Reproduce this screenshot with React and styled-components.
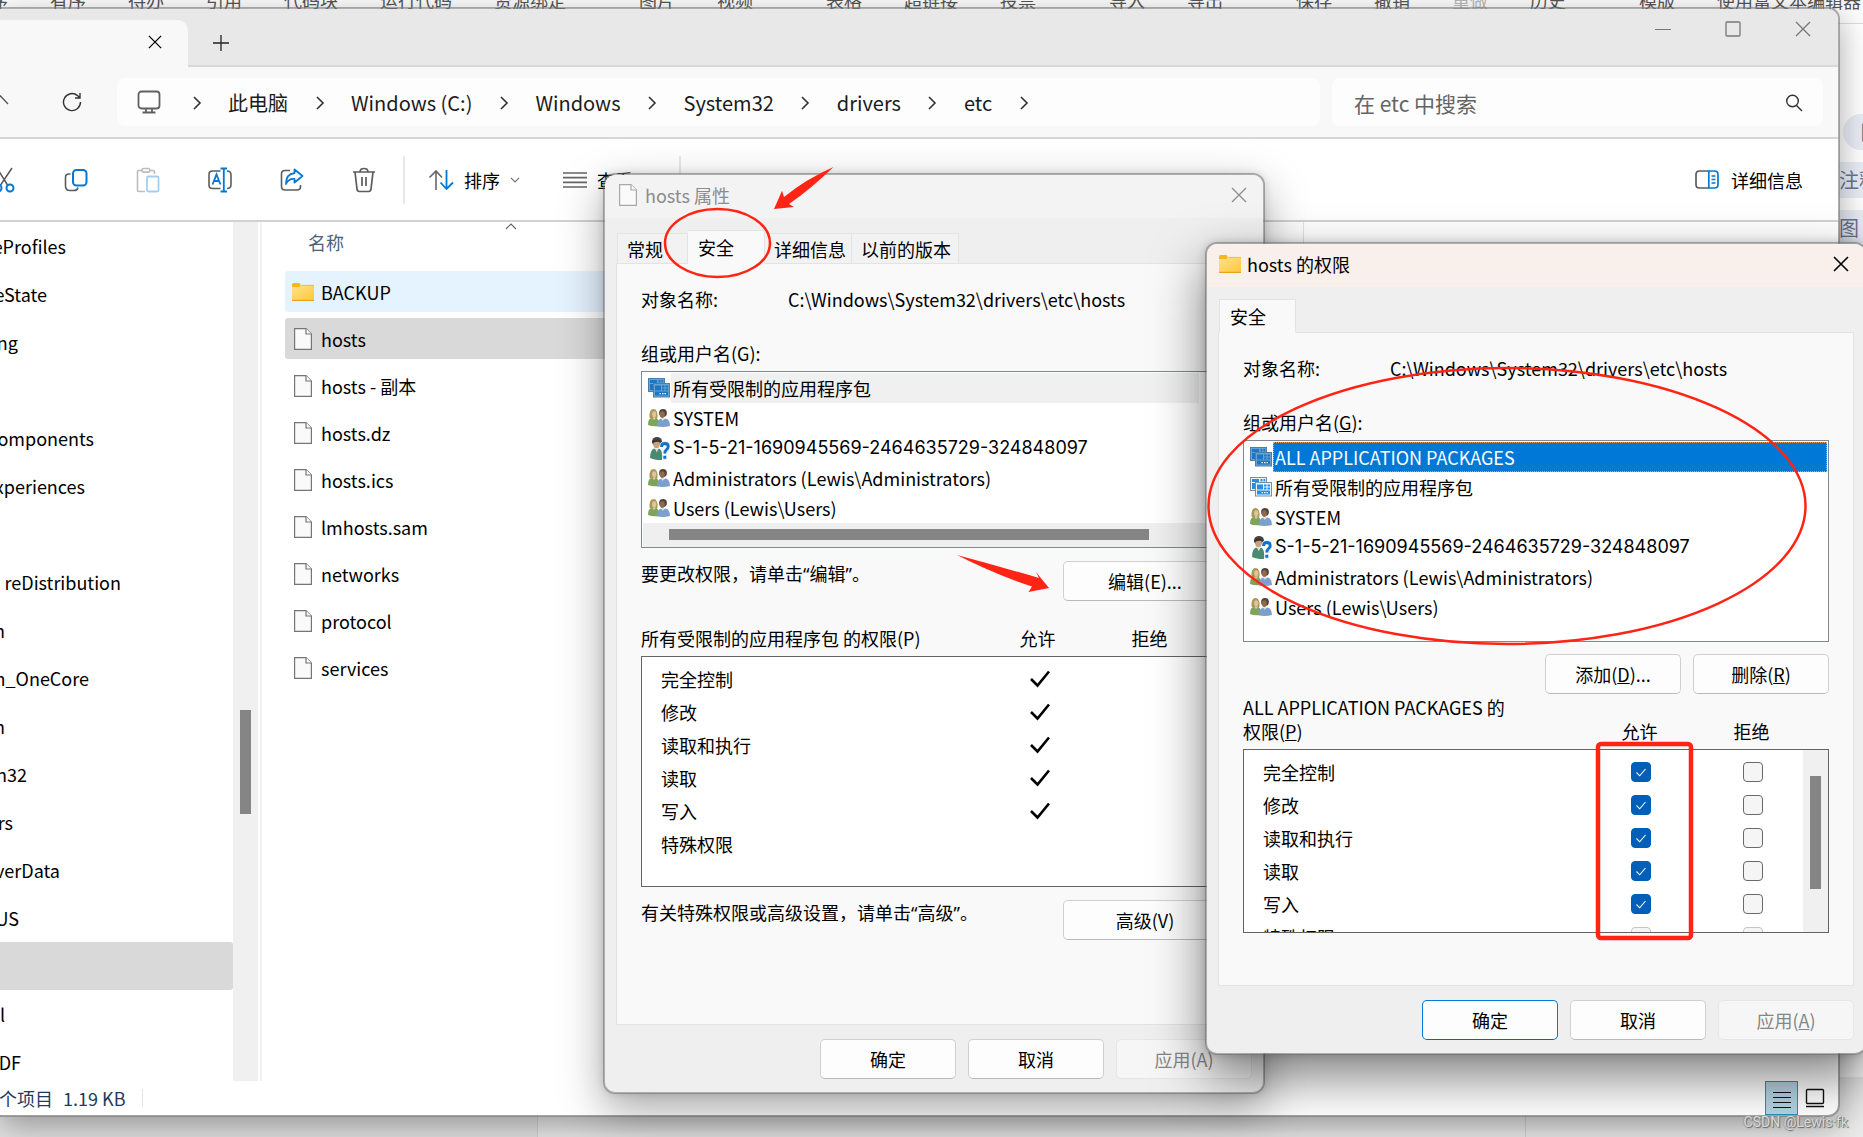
import React, { useState } from 'react'
import styled, { createGlobalStyle, css } from 'styled-components'

const GlobalStyle = createGlobalStyle`
*{
  box-sizing:border-box;
}
body{
  margin:0;
  overflow:hidden;
  font-family:"Noto Sans CJK SC", "Noto Sans", sans-serif;
  font-size:18px;
  line-height:24px;
  color:#000;
}
button, input{
  font:inherit;
  color:inherit;
}
button{
  border:none;
  background:none;
  padding:0;
}
svg{
  display:block;
  flex:none;
}
`;

// desktop
const Desktop = styled.div`
position:relative;
display:flex;
flex-direction:column;
justify-content:space-between;
height:100vh;
overflow:hidden;
background-color:#fff;
`;
const EditorBar = styled.div`
display:flex;
gap:73px;
height:24px;
margin-left:-10px;
background-color:#fdfdfd;
border-bottom:1px solid #ddd;
color:#555;
white-space:nowrap;
`;
const EditorGroup = styled.div`
display:flex;
gap:42px;
margin-top:-12px;
`;
const EditorItem = styled.span`
opacity:${({ $off }) => ($off ? 0.4 : 1)};
`;
const EditorSide = styled.div`
display:flex;
flex-direction:column;
align-items:flex-end;
flex:1;
gap:12px;
padding-top:90px;
color:#6d7590;
font-size:20px;
`;
const SideTag = styled.div`
display:flex;
align-items:center;
height:36px;
overflow:hidden;
white-space:nowrap;
border-radius:${({ $round }) => ($round ? '18px 0 0 18px' : '0')};
padding-left:${({ $round }) => ($round ? '16px' : '0')};
width:${({ $round }) => ($round ? '20px' : '24px')};
background-color:#e9edf6;
`;
const DeskFooter = styled.div`
display:flex;
height:60px;
background-color:#ececec;
`;
const DeskFooterPart = styled.div`
width:${({ $width }) => $width};
background-color:${({ $color }) => $color};
border-right:1px solid #d4d4d4;
`;

// explorer window
const Explorer = styled.main`
position:absolute;
top:7px;
left:0;
right:23px;
bottom:20px;
display:flex;
flex-direction:column;
border:2px solid rgba(120, 120, 120, 0.6);
border-left:none;
border-radius:0 12px 12px 0;
background-color:#fff;
background-clip:padding-box;
box-shadow:0 10px 32px rgba(0, 0, 0, 0.34);
overflow:hidden;
`;
const TitleRow = styled.div`
display:flex;
height:58px;
background-color:#e8e8e8;
border-bottom:2px solid #d8d8d8;
`;
const Tab = styled.div`
display:flex;
align-items:center;
justify-content:flex-end;
width:188px;
height:47px;
margin-top:11px;
padding:0 26px 3px 0;
border-radius:0 10px 0 0;
background-color:#f8f8f8;
`;
const NewTab = styled.button`
width:66px;
margin-top:11px;
display:flex;
align-items:center;
justify-content:center;
height:46px;
`;
const WindowButtons = styled.div`
display:flex;
margin-left:auto;
height:40px;
`;
const WindowButton = styled.button`
display:flex;
align-items:center;
justify-content:center;
width:70px;
color:#777;
`;
const NavRow = styled.div`
display:flex;
align-items:center;
height:72px;
padding-right:15px;
background-color:#f8f8f8;
border-bottom:2px solid #d6d6d6;
`;
const NavButton = styled.button`
display:flex;
justify-content:center;
width:${({ $width }) => $width};
`;
const Address = styled.nav`
display:flex;
align-items:center;
gap:4px;
flex:1;
height:48px;
margin-right:12px;
padding-left:20px;
border-radius:8px;
background-color:#fdfdfd;
color:#1b1b1b;
`;
const Crumbs = styled.div`
display:flex;
align-items:center;
padding-top:2px;
font-size:20px;
`;
const Crumb = styled.a`
color:inherit;
text-decoration:none;
white-space:nowrap;
`;
const CrumbArrow = styled.span`
display:flex;
justify-content:center;
width:63px;
`;
const Search = styled.label`
display:flex;
align-items:center;
width:491px;
height:48px;
padding:2px 20px 0 22px;
border-radius:8px;
background-color:#fdfdfd;
`;
const SearchInput = styled.input`
flex:1;
min-width:0;
border:none;
outline:none;
background:none;
padding:0;
font-size:21px;
&::placeholder{
  color:#646464;
  opacity:1;
}
`;
const Toolbar = styled.div`
display:flex;
align-items:center;
height:83px;
margin-left:-32px;
padding-right:35px;
border-bottom:2px solid #d2d2d2;
white-space:nowrap;
`;
const ToolButton = styled.button`
display:flex;
align-items:center;
justify-content:center;
width:72px;
height:48px;
`;
const MenuButton = styled.button`
display:flex;
align-items:center;
gap:${({ $push }) => ($push ? '12px' : '10px')};
margin-left:${({ $push }) => ($push ? 'auto' : '23px')};
margin-right:${({ $push }) => ($push ? '0' : '20px')};
`;
const Divider = styled.div`
width:2px;
height:48px;
margin-left:${({ $gap }) => $gap || '3px'};
background-color:#e8e8e8;
`;
const Body = styled.div`
display:flex;
flex:1;
min-height:0;
`;
const Tree = styled.ul`
width:233px;
margin:0;
padding:0;
list-style:none;
overflow:hidden;
`;
const TreeItem = styled.li`
display:flex;
height:48px;
align-items:center;
border-radius:0 3px 3px 0;
background-color:${({ $active }) => ($active ? '#d9d9d9' : 'transparent')};
`;
const TreeName = styled.span`
display:flex;
justify-content:flex-end;
white-space:nowrap;
width:${({ $end }) => $end}px;
`;
const TreeScroll = styled.div`
width:25px;
margin-right:2px;
padding:488px 7px 0;
background-color:#f0f0f0;
`;
const TreeThumb = styled.div`
height:104px;
background-color:#858585;
`;
const Files = styled.section`
flex:1;
border-left:2px solid #f2f2f2;
`;
const FilesHead = styled.div`
position:relative;
width:1042px;
height:49px;
padding:8px 0 0 46px;
border-right:1px solid #e2e2e2;
color:#4c607a;
`;
const SortMark = styled.span`
position:absolute;
top:0;
left:243px;
`;
const FileRows = styled.ul`
display:flex;
flex-direction:column;
gap:6px;
margin:0;
padding:0 0 0 23px;
list-style:none;
`;
const FileRow = styled.li`
display:flex;
align-items:center;
gap:7px;
width:960px;
height:41px;
padding-left:7px;
border-radius:3px;
background-color:${({ $tone }) => $tone || 'transparent'};
`;
const FileIcon = styled.span`
display:flex;
justify-content:center;
width:22px;
`;
const StatusBar = styled.footer`
display:flex;
align-items:center;
gap:10px;
height:34px;
margin-left:-1px;
padding-right:12px;
color:#1f3a5f;
white-space:nowrap;
`;
const StatusLine = styled.span`
width:1px;
height:18px;
margin-left:7px;
background-color:#e4e4e4;
`;
const ViewButtons = styled.div`
display:flex;
align-items:center;
align-self:stretch;
gap:6px;
margin-left:auto;
`;
const ViewButton = styled.button`
display:flex;
align-items:center;
justify-content:center;
height:34px;
width:${({ $on }) => ($on ? '33px' : '22px')};
padding-top:${({ $on }) => ($on ? '4px' : '0')};
border:${({ $on }) => ($on ? '1px solid #2a8fc4' : 'none')};
background-color:${({ $on }) => ($on ? '#b5d3e2' : 'transparent')};
`;

// property dialogs
const Dialog = styled.section`
position:absolute;
top:${({ $top }) => $top}px;
left:${({ $left }) => $left}px;
width:662px;
border:2px solid rgba(110, 110, 110, 0.55);
border-radius:12px;
background-color:#efefef;
background-clip:padding-box;
box-shadow:${({ $front }) => ($front
    ? '0 22px 52px rgba(0, 0, 0, 0.5), 0 0 10px rgba(0, 0, 0, 0.16)'
    : '0 16px 44px rgba(0, 0, 0, 0.34), 0 0 8px rgba(0, 0, 0, 0.12)')};
`;
const DialogTitle = styled.header`
display:flex;
align-items:center;
gap:${({ $front }) => ($front ? '6px' : '8px')};
height:43px;
padding:0 16px 3px ${({ $front }) => ($front ? '12px' : '14px')};
border-radius:10px 10px 0 0;
background-color:${({ $front }) => ($front ? '#f9f0eb' : '#f3f3f3')};
color:${({ $front }) => ($front ? '#000' : '#8c8c8c')};
`;
const CloseButton = styled.button`
margin-left:auto;
`;
const DialogBody = styled.div`
padding:12px 11px 13px;
`;
const Tabs = styled.div`
display:flex;
align-items:flex-end;
height:34px;
margin-bottom:-1px;
padding-left:1px;
`;
const DialogTab = styled.button`
height:31px;
width:${({ $width }) => $width}px;
padding:1px 0 0 9px;
text-align:left;
white-space:nowrap;
border:1px solid #e3e3e3;
border-left-width:${({ $first }) => ($first ? '1px' : '0')};
background-color:#f2f2f2;
${({ $active }) => $active && css`
height:34px;
padding:0 0 0 10px;
border-bottom-color:#f9f9f9;
background-color:#f9f9f9;
`}
`;
const Pane = styled.div`
height:${({ $height }) => $height}px;
padding:23px 24px 0;
border:1px solid #e3e3e3;
background-color:#f9f9f9;
`;
const ObjectLine = styled.div`
display:grid;
grid-template-columns:147px 1fr;
margin-bottom:30px;
`;
const FieldLabel = styled.div`
margin-bottom:6px;
`;
const Principals = styled.ul`
display:flex;
flex-direction:column;
height:${({ $height }) => $height}px;
margin:0;
padding:1px 1px 0;
list-style:none;
border:1px solid #828790;
background-color:#fff;
`;
const Principal = styled.li`
display:flex;
align-items:center;
height:30px;
padding-left:5px;
white-space:nowrap;
`;
const PrincipalName = styled.span`
flex:1;
height:30px;
margin-left:1px;
margin-right:${({ $inset }) => ($inset ? '26px' : '0')};
padding:2px 1px;
border:1px dotted transparent;
${({ $wide }) => $wide && css`
font-family:Inter, "Noto Sans", sans-serif;
`}
${({ $mark }) => $mark === 'focus' && css`
border-color:#e8a05a;
background-color:#0078d7;
color:#fff;
`}
${({ $mark }) => $mark === 'soft' && css`
background-color:#f0f0f0;
`}
`;
const HScroll = styled.div`
height:24px;
margin:auto 0 1px;
padding:6px 76px 7px 26px;
background-color:#efefef;
`;
const HThumb = styled.div`
height:11px;
background-color:#858585;
`;
const HintRow = styled.div`
display:flex;
justify-content:space-between;
margin:13px 0 0;
`;
const Quote = styled.span`
font-family:"Noto Sans", sans-serif;
`;
const ButtonRow = styled.div`
display:flex;
justify-content:flex-end;
gap:12px;
margin-top:${({ $top }) => $top}px;
`;
const Button = styled.button`
width:${({ $wide }) => ($wide ? '164px' : '136px')};
height:40px;
border:1px solid ${({ $primary }) => ($primary ? '#0078d4' : '#d0d0d0')};
border-bottom-color:${({ $primary }) => ($primary ? '#0067c0' : '#b9b9b9')};
border-radius:5px;
background-color:#fdfdfd;
&:disabled{
  border-color:#e6e6e6;
  background-color:#f6f6f6;
  color:#868686;
}
`;
const PermTable = styled.table`
display:block;
margin-top:${({ $top }) => $top}px;
`;
const PermHead = styled.thead`
display:block;
margin-bottom:6px;
`;
const PermRow = styled.tr`
display:grid;
grid-template-columns:340px 113px 111px;
align-items:${({ $head }) => ($head ? 'end' : 'center')};
height:${({ $head }) => ($head ? 'auto' : '33px')};
`;
const PermLabel = styled.th`
padding:0 50px 0 ${({ $indent }) => ($indent ? '19px' : '0')};
font-weight:400;
text-align:left;
`;
const NoBreak = styled.span`
white-space:nowrap;
`;
const PermTitle = styled.th`
padding:0;
font-weight:400;
text-align:center;
`;
const PermCell = styled.td`
display:flex;
justify-content:center;
padding:0;
`;
const PermBody = styled.tbody`
position:relative;
display:block;
height:${({ $height }) => $height}px;
padding-top:5px;
overflow:hidden;
border:1px solid #646464;
background-color:#fff;
`;
const PermBox = styled.div`
position:relative;
`;
const PermScroll = styled.div`
position:absolute;
right:1px;
bottom:1px;
width:25px;
height:182px;
padding:26px 7px 0;
background-color:#f0f0f0;
`;
const PermThumb = styled.div`
height:113px;
background-color:#858585;
`;
const CheckWrap = styled.span`
display:grid;
width:20px;
height:20px;
`;
const CheckInput = styled.input`
grid-area:1 / 1;
appearance:none;
width:20px;
height:20px;
margin:0;
border:1px solid #6a6a6a;
border-radius:4px;
background-color:#f5f5f5;
&:checked{
  border-color:#005fb8;
  background-color:#005fb8;
}
&:disabled{
  border-color:#c5c5c5;
}
`;
const CheckMark = styled.svg`
grid-area:1 / 1;
pointer-events:none;
`;
const Marks = styled.svg`
position:absolute;
top:0;
left:0;
pointer-events:none;
`;
const Watermark = styled.div`
position:absolute;
right:15px;
bottom:5px;
font-family:Roboto, sans-serif;
font-size:14px;
line-height:20px;
color:#d8d8d8;
text-shadow:1px 1px 1px #666, -1px 0 1px #999;
`;

const editorGroups = [
  ['序', '有序', '待办', '引用', '代码块', '运行代码', '资源绑定'],
  ['图片', '视频'],
  ['表格', '超链接', '投票'],
  ['导入', '导出'],
  ['保存', '撤销', '重做', '历史'],
  ['模版', '使用富文本编辑器'],
];
const crumbs = ['此电脑', 'Windows (C:)', 'Windows', 'System32', 'drivers', 'etc'];
// name and the x where it ends, the tree is scrolled to the right
const tree = [
  ['eProfiles', 66], ['eState', 47], ['ng', 18], ['', 0], ['omponents', 94], ['xperiences', 85], ['', 0],
  ['reDistribution', 121], ['n', 5], ['n_OneCore', 89], ['n', 5], ['n32', 27], ['rs', 13], ['verData', 60],
  ['US', 19], ['', 0], ['l', 5], ['DF', 21],
];
const files = ['BACKUP', 'hosts', 'hosts - 副本', 'hosts.dz', 'hosts.ics', 'lmhosts.sam', 'networks', 'protocol', 'services'];
const principals = [
  { name: 'ALL APPLICATION PACKAGES', kind: 'package' },
  { name: '所有受限制的应用程序包', kind: 'package' },
  { name: 'SYSTEM', kind: 'group' },
  { name: 'S-1-5-21-1690945569-2464635729-324848097', kind: 'unknown' },
  { name: 'Administrators (Lewis\\Administrators)', kind: 'group' },
  { name: 'Users (Lewis\\Users)', kind: 'group' },
];
const permissions = ['完全控制', '修改', '读取和执行', '读取', '写入', '特殊权限'];
const objectPath = 'C:\\Windows\\System32\\drivers\\etc\\hosts';

const Cross = ({ size = 16, width = 1.3 }) => (
  <svg width={size} height={size} viewBox="0 0 16 16" fill="none" stroke="currentColor" strokeWidth={width}>
    <path d="M1 1L15 15M15 1L1 15" />
  </svg>
);
const Chevron = () => (
  <svg width="10" height="16" viewBox="0 0 10 16" fill="none" stroke="#333" strokeWidth="1.6">
    <path d="M2 2L8 8L2 14" />
  </svg>
);
const SmallDown = () => (
  <svg width="10" height="8" viewBox="0 0 10 8" fill="none" stroke="#777" strokeWidth="1.1">
    <path d="M1 2L5 6L9 2" />
  </svg>
);
const FileGlyph = ({ faded }) => (
  <svg width="18" height="22" viewBox="0 0 18 22" fill="#fafafa" stroke={faded ? '#a8a8a8' : '#767676'} strokeWidth="1.2">
    <path d="M.6 .6H12L17.4 6V21.4H.6Z" />
    <path d="M12 .6V6H17.4" />
  </svg>
);
const FolderGlyph = () => (
  <svg width="22" height="18" viewBox="0 0 22 18">
    <defs>
      <linearGradient id="folder" x1="0" y1="0" x2="1" y2="1">
        <stop offset="0" stopColor="#ffe28f" />
        <stop offset="1" stopColor="#ffc83a" />
      </linearGradient>
    </defs>
    <path d="M0 1.5Q0 0 1.5 0H7Q8.5 0 8.5 1.5V5H0Z" fill="#f8b51c" />
    <path d="M0 4H8L9.5 2H22V17H0Z" fill="url(#folder)" />
    <path d="M9.5 2.4H22" stroke="#eeb52c" strokeWidth=".8" />
    <path d="M0 17.4H22" stroke="#e6a41d" strokeWidth="1.2" />
  </svg>
);
const PackageGlyph = ({ active }) => {
  const back = active ? '#6aa3d0' : '#eaf4fc';
  const tile = active ? '#1c76c2' : '#2290e6';
  const edge = active ? '#4c7ea8' : '#7d8c98';
  return (
    <svg width="22" height="20" viewBox="0 0 22 20">
      <rect x=".5" y=".5" width="16" height="13" fill={back} stroke={edge} />
      <path d="M2 2H9V5H2ZM10.500 2H12.500V4.500H10.500ZM13.500 2H15.200V4.500H13.500ZM2 6H5V12H2Z" fill={tile} />
      <rect x="5.500" y="5.500" width="16" height="13.500" fill={back} stroke={edge} />
      <path d="M7 7.500H13V12.500H7ZM14 7.500H16.500V9.500H14ZM17.500 7.500H20V9.500H17.500ZM14 10.500H16.500V12.500H14ZM17.500 10.500H20V12.500H17.500ZM7 13.500H20V17.500H7Z" fill={tile} />
      <path d="M11.500 15.600H13M14 15.600H15.500M16.500 15.600H18" stroke="#fff" strokeWidth="1.2" />
    </svg>
  )
};
const GroupGlyph = () => (
  <svg width="22" height="18" viewBox="0 0 22 18">
    <path d="M1.500 8.500Q1 0 5.500 0Q10 0 9.500 8.500Q8 10 5.500 10Q3 10 1.500 8.500Z" fill="#a79a55" />
    <ellipse cx="6.200" cy="5.200" rx="2.100" ry="3" fill="#e3c39c" />
    <path d="M0 16Q0 9.500 3.500 9L6 10.500L8.500 9Q11 10 11 17Q4.500 18 0 16Z" fill="#7ea45a" />
    <path d="M4.700 8.600L6 10.800L7.600 8.600Z" fill="#ecd6b6" />
    <ellipse cx="15" cy="4" rx="3.900" ry="4" fill="#50443f" />
    <ellipse cx="14.300" cy="5.600" rx="2.500" ry="3.400" fill="#94694a" />
    <path d="M9 17.500Q9 10.500 13 9.500L14.800 11L17.500 9.500Q22 10.500 22 17Q16 18.500 9 17.500Z" fill="#7c9fcc" />
    <path d="M13 9.200L14.700 12L16.800 9.200Z" fill="#cfdcec" />
  </svg>
);
const UnknownGlyph = () => (
  <svg width="22" height="23" viewBox="0 0 22 23">
    <ellipse cx="9" cy="4.500" rx="5" ry="4.500" fill="#454341" />
    <ellipse cx="8.500" cy="7" rx="3.300" ry="4.200" fill="#c9a27c" />
    <path d="M4 4Q9 .5 13.500 4.500L13 5.500Q8 3.500 4.500 6.500Z" fill="#383634" />
    <path d="M2 21Q2 13 6 11.500L9 13L11 11.500Q15 13 14 23Q7 23.500 2 21Z" fill="#4a8a70" />
    <path d="M7 11L8.800 15.500L10.500 11Z" fill="#dfe9e2" />
    <path d="M13.500 10Q13.500 6.500 16.800 6.500Q20.200 6.500 20.200 9.500Q20.200 11.500 18.200 13Q16.800 14.200 16.800 16.500" fill="none" stroke="#dcecf8" strokeWidth="4.600" />
    <path d="M13.500 10Q13.500 6.500 16.800 6.500Q20.200 6.500 20.200 9.500Q20.200 11.500 18.200 13Q16.800 14.200 16.800 16.500" fill="none" stroke="#1173c7" strokeWidth="2.800" />
    <rect x="15" y="18.500" width="3.600" height="3.600" fill="#1173c7" stroke="#dcecf8" strokeWidth=".7" />
  </svg>
);
const Tick = () => (
  <svg width="22" height="18" viewBox="0 0 22 18" fill="none" stroke="#000" strokeWidth="2.6">
    <path d="M3 9L9.500 15.500L21 1.500" />
  </svg>
);

const glyphs = { group: GroupGlyph, unknown: UnknownGlyph, package: PackageGlyph };

const PrincipalList = ({ items, height, mark, children, inset }) => (
  <Principals $height={height} aria-label="组或用户名">
    {items.map((item, i) => {
      const Glyph = glyphs[item.kind];
      return (
        <Principal key={item.name}>
          <Glyph active={i === 0} />
          <PrincipalName $mark={i === 0 ? mark : ''} $inset={inset} $wide={item.kind === 'unknown'}>{item.name}</PrincipalName>
        </Principal>
      )
    })}
    {children}
  </Principals>
);

const PermissionHead = ({ children }) => (
  <PermHead>
    <PermRow $head>
      <PermLabel scope="col">{children}</PermLabel>
      <PermTitle scope="col">允许</PermTitle>
      <PermTitle scope="col">拒绝</PermTitle>
    </PermRow>
  </PermHead>
);

const Check = ({ label, checked, disabled, onChange }) => (
  <CheckWrap>
    <CheckInput type="checkbox" aria-label={label} checked={checked} disabled={disabled} onChange={onChange} />
    {checked && (
      <CheckMark width="20" height="20" viewBox="0 0 20 20" fill="none" stroke="#fff" strokeWidth="1.1">
        <path d="M5.500 10.500L8.700 13.800L14.500 7" />
      </CheckMark>
    )}
  </CheckWrap>
);

const ExplorerTools = () => (
  <Toolbar>
    <ToolButton aria-label="剪切">
      <svg width="24" height="26" viewBox="0 0 24 26" fill="none" strokeWidth="1.5">
        <path d="M5 1L15.500 18M20 1L8.500 18" stroke="#555" />
        <circle cx="6" cy="21" r="3.500" stroke="#0078d4" strokeWidth="2" />
        <circle cx="18" cy="21" r="3.500" stroke="#0078d4" strokeWidth="2" />
      </svg>
    </ToolButton>
    <ToolButton aria-label="复制">
      <svg width="24" height="24" viewBox="0 0 24 24" fill="none" strokeWidth="1.6">
        <path d="M6.500 6H5Q1.500 6 1.500 9.500V18Q1.500 22.500 6 22.500H10Q13.500 22.500 14 19.500" stroke="#5c5c5c" />
        <rect x="9" y="2" width="13.500" height="15.500" rx="3.500" stroke="#0078d4" strokeWidth="2" />
      </svg>
    </ToolButton>
    <ToolButton aria-label="粘贴">
      <svg width="24" height="26" viewBox="0 0 24 26" fill="none" strokeWidth="1.6">
        <path d="M6 3.500H2.500Q1.500 3.500 1.500 4.500V23Q1.500 24.500 3 24.500H9M13.500 3.500H17Q18.500 3.500 18.500 5V7" stroke="#bdbdbd" />
        <rect x="6" y="1.500" width="8" height="3.600" rx="1.800" stroke="#bdbdbd" />
        <rect x="11" y="9.500" width="11.500" height="15" rx="1.500" stroke="#a5cdf0" strokeWidth="1.8" />
      </svg>
    </ToolButton>
    <ToolButton aria-label="重命名">
      <svg width="26" height="26" viewBox="0 0 26 26" fill="none" strokeWidth="1.6">
        <path d="M13.500 4H5.500Q2 4 2 7.500V18Q2 21.500 5.500 21.500H13.500M20 4Q24 4 24 8V17.500Q24 21.500 20 21.500" stroke="#5c5c5c" />
        <path d="M5.500 17.500L9.500 7.500L13.500 17.500M6.800 14H12.200" stroke="#0078d4" strokeWidth="1.8" />
        <path d="M13.500 1.500H20M13.500 24.500H20M16.800 1.500V24.500" stroke="#0078d4" strokeWidth="1.8" />
      </svg>
    </ToolButton>
    <ToolButton aria-label="共享">
      <svg width="24" height="24" viewBox="0 0 24 24" fill="none" strokeWidth="1.6" strokeLinejoin="round">
        <path d="M10 2.500H5Q1.500 2.500 1.500 6V18.500Q1.500 22 5 22H17Q20.500 22 20.500 18.500V17" stroke="#5c5c5c" />
        <path d="M14.500 1.500L22.500 8L14.500 14.500V11Q8.500 10.500 6 16Q6 6 14.500 5.200Z" stroke="#0078d4" strokeWidth="1.8" />
      </svg>
    </ToolButton>
    <ToolButton aria-label="删除">
      <svg width="24" height="26" viewBox="0 0 24 26" fill="none" stroke="#5c5c5c" strokeWidth="1.7">
        <path d="M1 5H23M8 5Q8 1.500 12 1.500Q16 1.500 16 5M3 5L5 22Q5.200 24.500 7.500 24.500H16.500Q18.800 24.500 19 22L21 5M10 10V19M14 10V19" />
      </svg>
    </ToolButton>
    <Divider />
    <MenuButton>
      <svg width="26" height="22" viewBox="0 0 26 22" fill="none" strokeWidth="1.6">
        <path d="M8 21V2M1.500 8.500L8 2L14 8.500" stroke="#666" />
        <path d="M18.500 1V20M12.500 13.500L18.500 20L25 13.500" stroke="#0078d4" strokeWidth="1.8" />
      </svg>
      排序
      <SmallDown />
    </MenuButton>
    <MenuButton>
      <svg width="24" height="16" viewBox="0 0 24 16" stroke="#666" strokeWidth="1.7">
        <path d="M0 1H24M0 5.600H24M0 10.300H24M0 15H24" />
      </svg>
      查看
      <SmallDown />
    </MenuButton>
    <Divider $gap="6px" />
    <MenuButton $push>
      <svg width="24" height="19" viewBox="0 0 24 19" fill="none" strokeWidth="1.7">
        <path d="M13.500 1H4.500Q1 1 1 4.500V14.500Q1 18 4.500 18H13.500" stroke="#5c5c5c" />
        <path d="M13.800 1H19.500Q23 1 23 4.500V14.500Q23 18 19.500 18H13.800Z" stroke="#0078d4" />
        <path d="M16.500 6H20.500M16.500 9.500H20.500M16.500 13H20.500" stroke="#0078d4" strokeWidth="1.3" />
      </svg>
      详细信息
    </MenuButton>
  </Toolbar>
);

const ExplorerWindow = () => (
  <Explorer>
    <TitleRow>
      <Tab><button aria-label="关闭标签页"><Cross size={14} width={1.5} /></button></Tab>
      <NewTab aria-label="新标签页">
        <svg width="16" height="16" viewBox="0 0 16 16" stroke="#222" strokeWidth="1.3">
          <path d="M8 0V16M0 8H16" />
        </svg>
      </NewTab>
      <WindowButtons>
        <WindowButton aria-label="最小化">
          <svg width="16" height="16" viewBox="0 0 16 16" stroke="currentColor"><path d="M0 8.500H16" /></svg>
        </WindowButton>
        <WindowButton aria-label="最大化">
          <svg width="16" height="16" viewBox="0 0 16 16" fill="none" stroke="currentColor" strokeWidth="1.3">
            <rect x="1" y="1" width="14" height="14" rx="1" />
          </svg>
        </WindowButton>
        <WindowButton aria-label="关闭"><Cross /></WindowButton>
      </WindowButtons>
    </TitleRow>
    <NavRow>
      <NavButton $width="27px" aria-label="上一级">
        <svg width="46" height="20" viewBox="0 0 46 20" fill="none" stroke="#555" strokeWidth="1.3">
          <path d="M2 12L9.500 4L17 12" />
        </svg>
      </NavButton>
      <NavButton $width="90px" aria-label="刷新">
        <svg width="20" height="20" viewBox="0 0 20 20" fill="none" stroke="#333" strokeWidth="1.4">
          <path d="M18.500 10A8.500 8.500 0 1 1 15.500 3.600L17.500 5.500M18 1V6H13" />
        </svg>
      </NavButton>
      <Address>
        <svg width="24" height="24" viewBox="0 0 24 24" fill="none" stroke="#606060" strokeWidth="1.8">
          <rect x="1.500" y="1.500" width="21" height="17" rx="3" />
          <path d="M9 18.500V22M15 18.500V22M5.500 22.500H18.500" />
        </svg>
        <Crumbs>
          {crumbs.map((crumb) => (
            <React.Fragment key={crumb}>
              <CrumbArrow><Chevron /></CrumbArrow>
              <Crumb href="#">{crumb}</Crumb>
            </React.Fragment>
          ))}
          <CrumbArrow><Chevron /></CrumbArrow>
        </Crumbs>
      </Address>
      <Search>
        <SearchInput type="text" aria-label="搜索" placeholder="在 etc 中搜索" />
        <svg width="18" height="18" viewBox="0 0 18 18" fill="none" stroke="#333" strokeWidth="1.4">
          <circle cx="7.500" cy="7" r="5.800" />
          <path d="M11.500 11.500L17 17" />
        </svg>
      </Search>
    </NavRow>
    <ExplorerTools />
    <Body>
      <Tree>
        {tree.map(([name, end], i) => (
          <TreeItem key={i} $active={i === 15}>
            <TreeName $end={end}>{name}</TreeName>
          </TreeItem>
        ))}
      </Tree>
      <TreeScroll><TreeThumb /></TreeScroll>
      <Files>
        <FilesHead>
          名称
          <SortMark>
            <svg width="12" height="8" viewBox="0 0 12 8" fill="none" stroke="#666" strokeWidth="1.1">
              <path d="M1 7L6 2L11 7" />
            </svg>
          </SortMark>
        </FilesHead>
        <FileRows>
          {files.map((name, i) => (
            <FileRow key={name} $tone={['#e5f3ff', '#d9d9d9'][i]}>
              <FileIcon>{i === 0 ? <FolderGlyph /> : <FileGlyph />}</FileIcon>
              {name}
            </FileRow>
          ))}
        </FileRows>
      </Files>
    </Body>
    <StatusBar>
      <span>个项目</span>
      <span>1.19 KB</span>
      <StatusLine />
      <ViewButtons>
        <ViewButton $on aria-label="详细列表">
          <svg width="18" height="18" viewBox="0 0 18 18" stroke="#111" strokeWidth="1.1">
            <path d="M0 1.500H18M0 6.500H18M0 11.500H18M0 16.500H18" />
          </svg>
        </ViewButton>
        <ViewButton aria-label="缩略图">
          <svg width="20" height="20" viewBox="0 0 20 20" fill="none" stroke="#111" strokeWidth="1.4">
            <rect x="1.500" y="1.500" width="17" height="14" rx="1" />
            <path d="M1 18.500H19" />
          </svg>
        </ViewButton>
      </ViewButtons>
    </StatusBar>
  </Explorer>
);

const PropertiesDialog = () => (
  <Dialog $top={173} $left={603}>
    <DialogTitle>
      <FileGlyph faded />
      hosts 属性
      <CloseButton aria-label="关闭"><Cross /></CloseButton>
    </DialogTitle>
    <DialogBody>
      <Tabs>
        <DialogTab $first $width={71}>常规</DialogTab>
        <DialogTab $active $width={77}>安全</DialogTab>
        <DialogTab $width={87}>详细信息</DialogTab>
        <DialogTab $width={107}>以前的版本</DialogTab>
      </Tabs>
      <Pane $height={762}>
        <ObjectLine>
          <span>对象名称:</span>
          <span>{objectPath}</span>
        </ObjectLine>
        <FieldLabel>组或用户名(G):</FieldLabel>
        <PrincipalList items={principals.slice(1)} height={177} mark="soft" inset>
          <HScroll><HThumb /></HScroll>
        </PrincipalList>
        <HintRow>
          <span>要更改权限，请单击<Quote>“</Quote>编辑<Quote>”</Quote>。</span>
          <Button $wide>编辑(E)...</Button>
        </HintRow>
        <PermTable $top={25}>
          <PermissionHead>所有受限制的应用程序包 的权限(P)</PermissionHead>
          <PermBody $height={231}>
            {permissions.map((name, i) => (
              <PermRow key={name}>
                <PermLabel scope="row" $indent>{name}</PermLabel>
                <PermCell>{i < 5 && <Tick />}</PermCell>
                <PermCell />
              </PermRow>
            ))}
          </PermBody>
        </PermTable>
        <HintRow>
          <span>有关特殊权限或高级设置，请单击<Quote>“</Quote>高级<Quote>”</Quote>。</span>
          <Button $wide>高级(V)</Button>
        </HintRow>
      </Pane>
      <ButtonRow $top={14}>
        <Button>确定</Button>
        <Button>取消</Button>
        <Button disabled>应用(A)</Button>
      </ButtonRow>
    </DialogBody>
  </Dialog>
);

const PermissionsDialog = () => {
  const [allowed, setAllowed] = useState([true, true, true, true, true, false]);
  const [denied, setDenied] = useState([false, false, false, false, false, false]);
  const flip = (list, i) => list.map((value, n) => (n === i ? !value : value));

  return (
    <Dialog $front $top={242} $left={1205}>
      <DialogTitle $front>
        <FolderGlyph />
        hosts 的权限
        <CloseButton aria-label="关闭"><Cross width={1.6} /></CloseButton>
      </DialogTitle>
      <DialogBody>
        <Tabs>
          <DialogTab $first $active $width={77}>安全</DialogTab>
        </Tabs>
        <Pane $height={654}>
          <ObjectLine>
            <span>对象名称:</span>
            <span>{objectPath}</span>
          </ObjectLine>
          <FieldLabel>组或用户名(<u>G</u>):</FieldLabel>
          <PrincipalList items={principals} height={202} mark="focus" />
          <ButtonRow $top={12}>
            <Button>添加(<u>D</u>)...</Button>
            <Button>删除(<u>R</u>)</Button>
          </ButtonRow>
          <PermBox>
            <PermTable $top={1}>
              <PermissionHead>ALL APPLICATION PACKAGES 的<NoBreak>权限(<u>P</u>)</NoBreak></PermissionHead>
              <PermBody $height={184}>
                {permissions.map((name, i) => (
                  <PermRow key={name}>
                    <PermLabel scope="row" $indent>{name}</PermLabel>
                    <PermCell>
                      <Check label={`${name} 允许`} checked={allowed[i]} disabled={i === 5} onChange={() => setAllowed(flip(allowed, i))} />
                    </PermCell>
                    <PermCell>
                      <Check label={`${name} 拒绝`} checked={denied[i]} disabled={i === 5} onChange={() => setDenied(flip(denied, i))} />
                    </PermCell>
                  </PermRow>
                ))}
              </PermBody>
            </PermTable>
            <PermScroll><PermThumb /></PermScroll>
          </PermBox>
        </Pane>
        <ButtonRow $top={14}>
          <Button $primary>确定</Button>
          <Button>取消</Button>
          <Button disabled>应用(<u>A</u>)</Button>
        </ButtonRow>
      </DialogBody>
    </Dialog>
  )
};

export default function App() {
  return (
    <>
      <GlobalStyle />
      <Desktop>
        <EditorBar>
          {editorGroups.map((group) => (
            <EditorGroup key={group[0]}>
              {group.map((item) => <EditorItem key={item} $off={item === '重做'}>{item}</EditorItem>)}
            </EditorGroup>
          ))}
        </EditorBar>
        <EditorSide>
          <SideTag $round>目</SideTag>
          <SideTag>注释</SideTag>
          <SideTag>图</SideTag>
        </EditorSide>
        <DeskFooter>
          <DeskFooterPart $width="538px" $color="#e4e4e4" />
          <DeskFooterPart $width="988px" $color="#ececec" />
        </DeskFooter>
        <ExplorerWindow />
        <PropertiesDialog />
        <PermissionsDialog />
        {/* hand drawn marks over the windows */}
        <Marks width="1863" height="1137" viewBox="0 0 1863 1137" fill="none" stroke="#ff2414">
          <ellipse cx="717.500" cy="243" rx="52.500" ry="34" strokeWidth="2.5" />
          <ellipse cx="1507" cy="506" rx="298.500" ry="138" strokeWidth="2.5" />
          <rect x="1598" y="744" width="93" height="194" rx="3" strokeWidth="4.5" />
          <path d="M833.500 167Q812 188 789 204L794 207L774 209L782 190.700L784 197Q806 179 833.500 167Z" fill="#ff2414" stroke="none" />
          <path d="M957 555Q998 566 1039 578L1036 572L1049 588L1028.500 592L1032 586.500Q994 574 957 555Z" fill="#ff2414" stroke="none" />
        </Marks>
        <Watermark>CSDN @Lewis·fk</Watermark>
      </Desktop>
    </>
  )
}
